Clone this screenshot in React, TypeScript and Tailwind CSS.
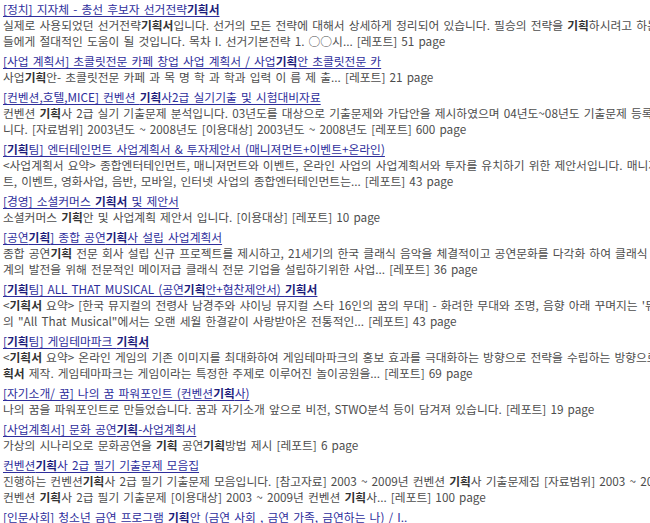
import React from 'react';

// 검색 결과 목록 (**굵게** 표시는 검색어 강조)
type ResultItem = {
  title: string;
  lines: string[];
};

const RESULTS: ResultItem[] = [
  {
    title: '[정치] 지자체 - 총선 후보자 선거전략**기획서**',
    lines: [
      '실제로 사용되었던 선거전략**기획서**입니다. 선거의 모든 전략에 대해서 상세하게 정리되어 있습니다. 필승의 전략을 **기획**하시려고 하는 분',
      '들에게 절대적인 도움이 될 것입니다. 목차 I. 선거기본전략 1. ○○시... [레포트] 51 page',
    ],
  },
  {
    title: '[사업 계획서] 초콜릿전문 카페 창업 사업 계획서 / 사업**기획**안 초콜릿전문 카',
    lines: ['사업**기획**안- 초콜릿전문 카페 과 목 명 학 과 학과 입력 이 름 제 출... [레포트] 21 page'],
  },
  {
    title: '[컨벤션,호텔,MICE] 컨벤션 **기획**사2급 실기기출 및 시험대비자료',
    lines: [
      '컨벤션 **기획**사 2급 실기 기출문제 분석입니다. 03년도를 대상으로 기출문제와 가답안을 제시하였으며 04년도~08년도 기출문제 등록되어 있습',
      '니다. [자료범위] 2003년도 ~ 2008년도 [이용대상] 2003년도 ~ 2008년도 [레포트] 600 page',
    ],
  },
  {
    title: '[**기획**팀] 엔터테인먼트 사업계획서 & 투자제안서 (매니져먼트+이벤트+온라인)',
    lines: [
      '<사업계획서 요약> 종합엔터테인먼트, 매니져먼트와 이벤트, 온라인 사업의 사업계획서와 투자를 유치하기 위한 제안서입니다. 매니져먼',
      '트, 이벤트, 영화사업, 음반, 모바일, 인터넷 사업의 종합엔터테인먼트는... [레포트] 43 page',
    ],
  },
  {
    title: '[경영] 소셜커머스 **기획서** 및 제안서',
    lines: ['소셜커머스 **기획**안 및 사업계획 제안서 입니다. [이용대상] [레포트] 10 page'],
  },
  {
    title: '[공연**기획**] 종합 공연**기획**사 설립 사업계획서',
    lines: [
      '종합 공연**기획** 전문 회사 설립 신규 프로젝트를 제시하고, 21세기의 한국 클래식 음악을 체결적이고 공연문화를 다각화 하여 클래식 세',
      '계의 발전을 위해 전문적인 메이저급 클래식 전문 기업을 설립하기위한 사업... [레포트] 36 page',
    ],
  },
  {
    title: '[**기획**팀] ALL THAT MUSICAL (공연**기획**안+협찬제안서) **기획서**',
    lines: [
      '<**기획서** 요약> [한국 뮤지컬의 전령사 남경주와 샤이닝 뮤지컬 스타 16인의 꿈의 무대] - 화려한 무대와 조명, 음향 아래 꾸며지는 \'뮤지컬',
      '의 "All That Musical"에서는 오랜 세월 한결같이 사랑받아온 전통적인... [레포트] 43 page',
    ],
  },
  {
    title: '[**기획**팀] 게임테마파크 **기획서**',
    lines: [
      '<**기획서** 요약> 온라인 게임의 기존 이미지를 최대화하여 게임테마파크의 홍보 효과를 극대화하는 방향으로 전략을 수립하는 방향으로 **기**',
      '**획서** 제작. 게임테마파크는 게임이라는 특정한 주제로 이루어진 놀이공원을... [레포트] 69 page',
    ],
  },
  {
    title: '[자기소개/ 꿈] 나의 꿈 파워포인트 (컨벤션**기획**사)',
    lines: ['나의 꿈을 파워포인트로 만들었습니다. 꿈과 자기소개 앞으로 비전, STWO분석 등이 담겨져 있습니다. [레포트] 19 page'],
  },
  {
    title: '[사업계획서] 문화 공연**기획**-사업계획서',
    lines: ['가상의 시나리오로 문화공연을 **기획** 공연**기획**방법 제시 [레포트] 6 page'],
  },
  {
    title: '컨벤션**기획**사 2급 필기 기출문제 모음집',
    lines: [
      '진행하는 컨벤션**기획**사 2급 필기 기출문제 모음입니다. [참고자료] 2003 ~ 2009년 컨벤션 **기획**사 기출문제집 [자료범위] 2003 ~ 2009',
      '컨벤션 **기획**사 2급 필기 기출문제 [이용대상] 2003 ~ 2009년 컨벤션 **기획**사... [레포트] 100 page',
    ],
  },
  {
    title: '[인문사회] 청소년 금연 프로그램 **기획**안 (금연 사회 , 금연 가족, 금연하는 나) / I..',
    lines: [],
  },
];

// **...** 부분을 굵은 글씨로 바꾼다
const renderMarked = (text: string, boldClass: string) =>
  text.split('**').map((part, i) =>
    i % 2 === 1 ? (
      <b key={i} className={boldClass}>
        {part}
      </b>
    ) : (
      <React.Fragment key={i}>{part}</React.Fragment>
    )
  );

const App: React.FC = () => {
  return (
    <div
      className="w-[650px] h-[523px] overflow-hidden bg-white pt-px pl-[3px] text-[11.75px] leading-[16px] [word-spacing:1.5px]"
      style={{ fontFamily: '"Noto Sans CJK KR", "Noto Sans", sans-serif' }}
    >
      <ul className="flex flex-col gap-1">
        {RESULTS.map((item, idx) => (
          <li key={idx} className="whitespace-nowrap">
            <a href="#" className="block text-[#2e2e9c] underline underline-offset-2">
              {renderMarked(item.title, 'font-bold text-[#1d1d7a]')}
            </a>
            {item.lines.map((line, j) => (
              <p key={j} className="text-[#4d4d4d]">
                {renderMarked(line, 'font-bold text-[#333333]')}
              </p>
            ))}
          </li>
        ))}
      </ul>
    </div>
  );
};

export default App;
